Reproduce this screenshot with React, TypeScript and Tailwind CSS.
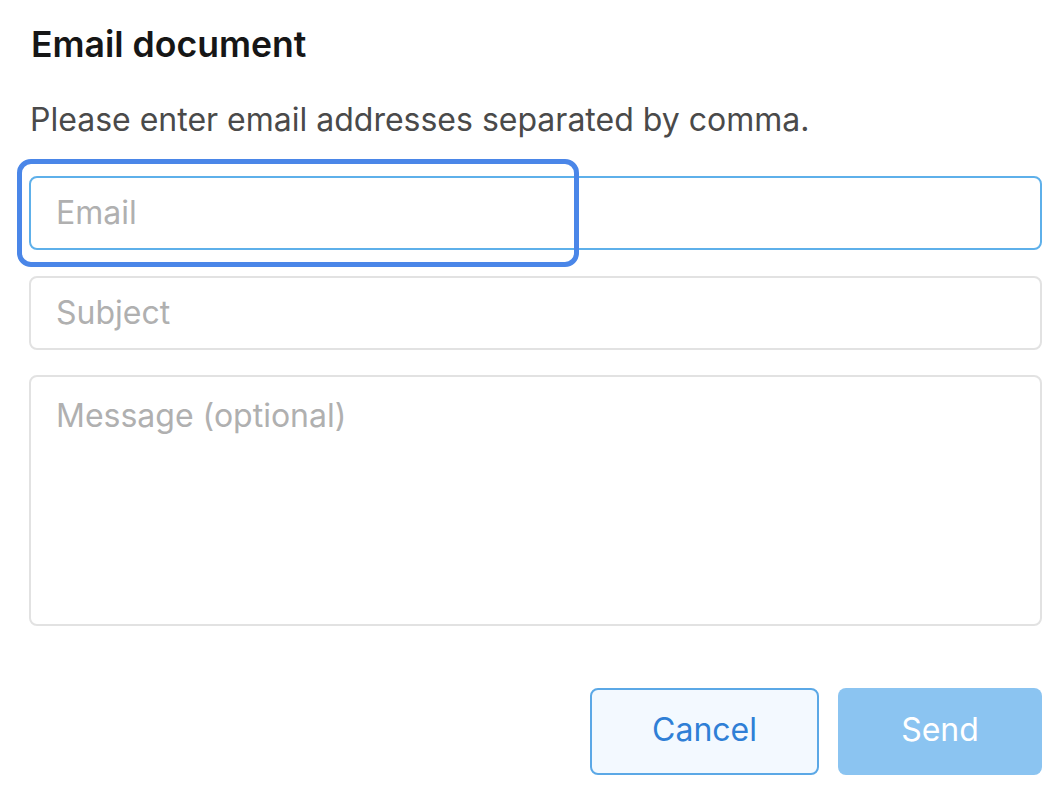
import React from "react";

export default function App() {
  const font = { fontFamily: "Inter, 'Noto Sans', sans-serif" };
  return (
    <div className="w-[1060px] h-[787px] bg-white relative overflow-hidden" style={font}>
      <div className="pl-[29px] pr-[18px] pt-[23px] flex flex-col">
        <h1 className="text-[35.6px] font-semibold text-[#161616] leading-[44px] pl-[2px]">Email document</h1>
        <p className="mt-[33px] text-[32px] text-[#4a4a4a] leading-[40px] pl-[1px]">
          Please enter email addresses separated by comma.
        </p>
        <div className="mt-[36px] h-[74px] border-2 border-[#5eb0ea] rounded-[8px] flex items-center px-[25px]">
          <span className="text-[32px] text-[#b0b0b0]">Email</span>
        </div>
        <div className="mt-[26px] h-[74px] border-2 border-[#e2e2e2] rounded-[8px] flex items-center px-[25px]">
          <span className="text-[32px] text-[#b0b0b0]">Subject</span>
        </div>
        <div className="mt-[25px] h-[251px] border-2 border-[#e2e2e2] rounded-[8px] px-[25px] pt-[19px]">
          <span className="text-[32px] text-[#b0b0b0] leading-[40px]">Message (optional)</span>
        </div>
        <div className="mt-[62px] flex justify-end gap-[19px]">
          <button className="w-[229px] h-[87px] border-2 border-[#5ba8e6] bg-[#f3f9ff] rounded-[8px] text-[32px] text-[#2f7fd6] pb-[4px]">
            Cancel
          </button>
          <button className="w-[204px] h-[87px] bg-[#8bc4f1] rounded-[8px] text-[32px] text-white pb-[4px]">
            Send
          </button>
        </div>
      </div>
      <div className="absolute left-[17px] top-[159px] w-[562px] h-[108px] border-[5px] border-[#4a86e8] rounded-[14px] pointer-events-none" />
    </div>
  );
}
